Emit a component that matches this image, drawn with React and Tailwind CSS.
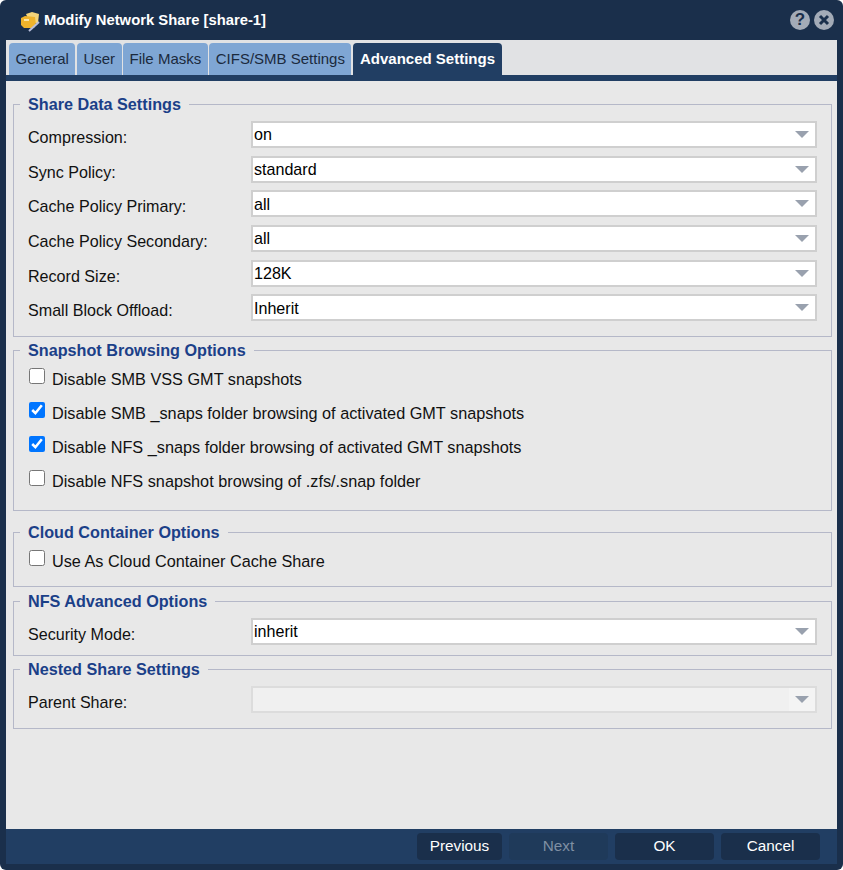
import React from "react";

const tabs = ["General", "User", "File Masks", "CIFS/SMB Settings"];

const dataRows = [
  { label: "Compression:", value: "on" },
  { label: "Sync Policy:", value: "standard" },
  { label: "Cache Policy Primary:", value: "all" },
  { label: "Cache Policy Secondary:", value: "all" },
  { label: "Record Size:", value: "128K" },
  { label: "Small Block Offload:", value: "Inherit" },
];

const snapshotRows = [
  { label: "Disable SMB VSS GMT snapshots", checked: false },
  { label: "Disable SMB _snaps folder browsing of activated GMT snapshots", checked: true },
  { label: "Disable NFS _snaps folder browsing of activated GMT snapshots", checked: true },
  { label: "Disable NFS snapshot browsing of .zfs/.snap folder", checked: false },
];

const Section = ({ title, className, children }) => (
  <fieldset className={`mr-[5px] ml-[7px] border border-[#b5b8c8] px-[14px] ${className}`}>
    <legend className="-ml-[8px] px-[8px] text-[16.2px] leading-[18px] font-bold text-[#1b4088]">{title}</legend>
    {children}
  </fieldset>
);

const Combo = ({ label, value, disabled }) => (
  <div className="flex h-[27px] items-center">
    <label className="w-[223px] pt-[5px] text-[16.1px] text-[#111]">{label}</label>
    <div className={`flex h-full flex-1 items-center justify-between border-2 ${disabled ? "border-[#dcdcdc] bg-[#f0f0f0]" : "border-[#cfcfcf] bg-white"}`}>
      <span className="pl-[1px] text-[16.1px] text-black">{value}</span>
      <span className={`flex h-full w-[26px] items-center justify-center ${disabled ? "bg-[#f4f4f4]" : ""}`}>
        <svg width="14" height="7" viewBox="0 0 14 7">
          <polygon points="0,0 14,0 7,7" fill="#99a1ae" />
        </svg>
      </span>
    </div>
  </div>
);

const Check = ({ label, checked }) => (
  <div className="flex h-[34px] items-start">
    <input type="checkbox" defaultChecked={checked} className="ml-[1px] h-4 w-4 shrink-0 accent-[#0075ff]" />
    <span className="ml-[7px] text-[16.25px] leading-[22px] text-[#111]">{label}</span>
  </div>
);

const FooterButton = ({ children, width, disabled }) => (
  <button
    className={`h-[27px] rounded-[4px] text-[15.3px] ${width} ${
      disabled ? "bg-[#1f3a5a] text-[#7f8fa3]" : "bg-[#1a2f4b] text-white"
    }`}
  >
    {children}
  </button>
);

export default function App() {
  return (
    <div className="flex h-[870px] w-[843px] flex-col rounded-[6px] bg-[#1a2f4b] font-['Liberation_Sans',Arial,sans-serif]">
      {/* Title bar */}
      <div className="flex h-[40px] shrink-0 items-center pr-[9px] pl-[20px]">
        <svg width="20" height="22" viewBox="0 0 20 22" className="mt-[2px] mr-[4px]">
          <path d="M6 4 L12 2 L19 4 L18 13 L10 13 Z" fill="#f5d57a" />
          <path d="M1 8 L5 6 L15 7 L16 15 L14 18 L4 18 L1 15 Z" fill="#f0b42c" />
          <path d="M4 9 L9 9 L9 11 L4 11 Z" fill="#fbe6a8" />
          <path d="M9 21 L19 12" stroke="#b9bfdc" strokeWidth="2" />
        </svg>
        <span className="flex-1 text-[14.8px] font-bold text-white">Modify Network Share [share-1]</span>
        <span className="flex h-[20px] w-[20px] items-center justify-center rounded-full bg-[#a3abb7] text-[17px] font-bold text-[#1a2f4b]">?</span>
        <span className="ml-[4px] flex h-[20px] w-[20px] items-center justify-center rounded-full bg-[#a3abb7]">
          <svg width="12" height="12" viewBox="0 0 12 12">
            <path d="M2 2 L10 10 M10 2 L2 10" stroke="#1a2f4b" strokeWidth="3" />
          </svg>
        </span>
      </div>

      {/* Window body */}
      <div className="mx-[6px] flex min-h-0 flex-1 flex-col">
        <div className="flex h-[35px] shrink-0 items-end gap-[1.5px] bg-[#e1e2e4] pl-[3px]">
          {tabs.map((tab) => (
            <div key={tab} className="flex h-[32px] items-center rounded-t-[4px] bg-[#7fa6d4] px-[6.5px] text-[15px] text-[#1b2a3d]">
              {tab}
            </div>
          ))}
          <div className="flex h-[32px] items-center rounded-t-[4px] bg-[#213e63] px-[7px] text-[15px] font-bold text-white">
            Advanced Settings
          </div>
        </div>
        <div className="h-[6px] shrink-0 bg-[#213e63]" />

        <div className="flex flex-1 flex-col gap-[4px] bg-[#e8e8e8] pt-[14px]">
          <Section title="Share Data Settings" className="h-[242px]">
            <div className="flex flex-col gap-[7.65px] pt-[8px]">
              {dataRows.map((row) => (
                <Combo key={row.label} label={row.label} value={row.value} />
              ))}
            </div>
          </Section>

          <Section title="Snapshot Browsing Options" className="h-[170px]">
            <div className="pt-[9px]">
              {snapshotRows.map((row) => (
                <Check key={row.label} label={row.label} checked={row.checked} />
              ))}
            </div>
          </Section>

          <div className="h-[4px]" />

          <Section title="Cloud Container Options" className="h-[64px]">
            <div className="pt-[9px]">
              <Check label="Use As Cloud Container Cache Share" checked={false} />
            </div>
          </Section>

          <Section title="NFS Advanced Options" className="mt-[1px] h-[64px]">
            <div className="pt-[8px]">
              <Combo label="Security Mode:" value="inherit" />
            </div>
          </Section>

          <Section title="Nested Share Settings" className="h-[69px]">
            <div className="pt-[8px]">
              <Combo label="Parent Share:" value="" disabled />
            </div>
          </Section>
        </div>

        {/* Footer */}
        <div className="flex h-[35px] shrink-0 items-center justify-end gap-[7px] bg-[#213e63] pr-[17px]">
          <FooterButton width="w-[85px]">Previous</FooterButton>
          <FooterButton width="w-[99px]" disabled>Next</FooterButton>
          <FooterButton width="w-[99px]">OK</FooterButton>
          <FooterButton width="w-[99px]">Cancel</FooterButton>
        </div>
      </div>
      <div className="h-[6px] shrink-0" />
    </div>
  );
}
